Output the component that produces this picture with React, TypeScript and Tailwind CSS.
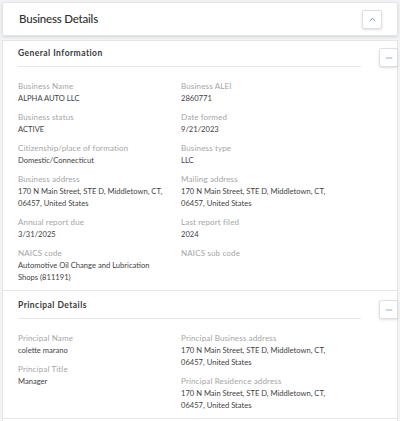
import { ChevronUp, Minus } from "lucide-react";

const font = { fontFamily: "Lato, 'Open Sans', sans-serif" };

type Item = { label: string; value?: string[] };

const general: Item[] = [
  { label: "Business Name", value: ["ALPHA AUTO LLC"] },
  { label: "Business ALEI", value: ["2860771"] },
  { label: "Business status", value: ["ACTIVE"] },
  { label: "Date formed", value: ["9/21/2023"] },
  { label: "Citizenship/place of formation", value: ["Domestic/Connecticut"] },
  { label: "Business type", value: ["LLC"] },
  { label: "Business address", value: ["170 N Main Street, STE D, Middletown, CT,", "06457, United States"] },
  { label: "Mailing address", value: ["170 N Main Street, STE D, Middletown, CT,", "06457, United States"] },
  { label: "Annual report due", value: ["3/31/2025"] },
  { label: "Last report filed", value: ["2024"] },
  { label: "NAICS code", value: ["Automotive Oil Change and Lubrication", "Shops (811191)"] },
  { label: "NAICS sub code" },
];

const principalLeft: Item[] = [
  { label: "Principal Name", value: ["colette marano"] },
  { label: "Principal Title", value: ["Manager"] },
];

const principalRight: Item[] = [
  { label: "Principal Business address", value: ["170 N Main Street, STE D, Middletown, CT,", "06457, United States"] },
  { label: "Principal Residence address", value: ["170 N Main Street, STE D, Middletown, CT,", "06457, United States"] },
];

function Field({ item }: { item: Item }) {
  return (
    <div className="mb-[7px]">
      <div className="text-[8px] leading-[12px] tracking-[0.15px] text-[#a5a5a5]">{item.label}</div>
      {item.value?.map((line) => (
        <div key={line} className="text-[7.6px] leading-[12px] text-[#3f3f3f]">
          {line}
        </div>
      ))}
    </div>
  );
}

function SectionHead({ title }: { title: string }) {
  return (
    <div className="flex items-end">
      <div className="ml-[15px] w-[343px] border-b border-[#e6e6e6] pb-[7px]">
        <h3 className="text-[8.5px] leading-[12px] font-bold tracking-[0.45px] text-[#3a3a3a]">{title}</h3>
      </div>
      <button className="ml-auto mr-[-1px] flex h-[19px] w-[19px] items-center justify-center rounded-[2px] border border-[#dcdfe3] bg-white shadow-sm">
        <Minus className="h-[10px] w-[10px] text-[#7fa3c4]" strokeWidth={2} />
      </button>
    </div>
  );
}

export default function App() {
  return (
    <div className="min-h-[421px] w-[400px] bg-[#f2f3f5] px-[2px] pt-[2px]" style={font}>
      <div className="flex h-[34px] items-center justify-between rounded-[2px] border border-[#e3e5e8] bg-white pl-[16px] pr-[15px] shadow-sm">
        <h2 className="text-[11.5px] font-medium tracking-[-0.2px] text-[#2f2f2f]">Business Details</h2>
        <button className="flex h-[19px] w-[20px] items-center justify-center rounded-[2px] border border-[#dcdfe3] bg-white shadow-sm">
          <ChevronUp className="h-[9px] w-[9px] text-[#5f8fb8]" strokeWidth={2.5} />
        </button>
      </div>

      <div className="mt-[4px] border border-[#e3e5e8] bg-white">
        <section className="border-b border-[#e6e6e6] pt-[6px]">
          <SectionHead title="General Information" />
          <div className="grid grid-cols-[163px_1fr] pt-[13px] pl-[15px]">
            {general.map((item) => (
              <Field key={item.label} item={item} />
            ))}
          </div>
        </section>

        <section className="border-b border-[#e6e6e6] pt-[8px]">
          <SectionHead title="Principal Details" />
          <div className="flex pt-[13px] pl-[15px]">
            <div className="w-[163px]">
              {principalLeft.map((item) => (
                <Field key={item.label} item={item} />
              ))}
            </div>
            <div>
              {principalRight.map((item) => (
                <Field key={item.label} item={item} />
              ))}
            </div>
          </div>
        </section>
        <div className="h-[20px]" />
      </div>
    </div>
  );
}
